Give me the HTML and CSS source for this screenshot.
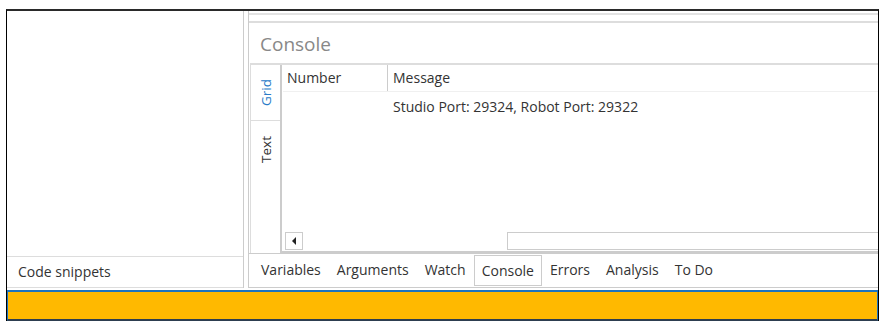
FILE: index.html
```html
<!DOCTYPE html>
<html lang="en">

<head>
    <meta charset="UTF-8">
    <title>Console</title>
    <link rel="stylesheet" href="styles.css">
</head>

<body>
    <div class="frame">
        <div class="main">
            <!-- Left panel -->
            <div class="left-panel">
                <div class="left-fill"></div>
                <div class="left-tab">Code snippets</div>
            </div>

            <!-- Right panel -->
            <div class="right-panel">
                <div class="top-strip"></div>
                <div class="console">
                    <div class="console-title">Console</div>
                    <div class="console-body">
                        <div class="side-tabs">
                            <div class="side-tab active"><span>Grid</span></div>
                            <div class="side-tab"><span>Text</span></div>
                        </div>
                        <div class="grid">
                            <div class="grid-head">
                                <div class="col-num">Number</div>
                                <div class="col-msg">Message</div>
                            </div>
                            <div class="grid-row">
                                <div class="col-num"></div>
                                <div class="col-msg">Studio Port: 29324, Robot Port: 29322</div>
                            </div>
                            <div class="grid-fill"></div>
                            <div class="hscroll">
                                <div class="arrow-btn"><span class="tri"></span></div>
                                <div class="track"></div>
                                <div class="thumb"></div>
                            </div>
                        </div>
                    </div>
                </div>
                <div class="bottom-tabs">
                    <div class="btab">Variables</div>
                    <div class="btab">Arguments</div>
                    <div class="btab">Watch</div>
                    <div class="btab active">Console</div>
                    <div class="btab">Errors</div>
                    <div class="btab">Analysis</div>
                    <div class="btab">To Do</div>
                </div>
            </div>
        </div>

        <!-- Status bar -->
        <div class="status-bar"></div>
    </div>
</body>

</html>
```

FILE: styles.css
```css
body {
    margin: 0;
    background: #fff;
    font-family: 'Open Sans', 'Noto Sans', sans-serif;
    font-size: 13px;
    color: #333;
}

.frame {
    margin: 9px 0 0 6px;
    width: 871px;
    border: 1px solid #000;
    border-top: 2px solid #2a2a2a;
    border-bottom: none;
}

.main {
    display: flex;
    height: 277px;
}

.left-panel {
    width: 236px;
    border-right: 1px solid #ccc;
    display: flex;
    flex-direction: column;
}

.left-fill {
    flex: 1;
}

.left-tab {
    height: 30px;
    border-top: 1px solid #ddd;
    border-bottom: 1px solid #ddd;
    padding-left: 11px;
    line-height: 29px;
    font-size: 14px;
    color: #333;
}

.right-panel {
    flex: 1;
    margin-left: 4px;
    display: flex;
    flex-direction: column;
    border-left: 1px solid #ccc;
}

.top-strip {
    height: 2px;
    border-bottom: 2px solid #e2e2e2;
}

.console {
    margin-top: 6px;
    border-top: 2px solid #ddd;
    flex: 1;
    display: flex;
    flex-direction: column;
    padding-left: 1px;
}

.console-title {
    height: 40px;
    line-height: 43px;
    font-size: 19px;
    color: #888;
    padding-left: 10px;
    border-bottom: 2px solid #ddd;
}

.console-body {
    flex: 1;
    display: flex;
}

.side-tabs {
    width: 29px;
    border-left: 1px solid #ddd;
    display: flex;
    flex-direction: column;
}

.side-tab {
    display: flex;
    align-items: center;
    justify-content: center;
    font-size: 13.5px;
    color: #333;
}

.side-tab span {
    writing-mode: vertical-rl;
    transform: rotate(180deg);
}

.side-tab.active {
    height: 55px;
    color: #2a7bc8;
    border-bottom: 1px solid #ddd;
}

.side-tab:not(.active) {
    height: 56px;
}

.grid {
    flex: 1;
    display: flex;
    flex-direction: column;
    border-left: 2px solid #ccc;
    border-bottom: 2px solid #ccc;
    padding-left: 1px;
}

.grid-head {
    display: flex;
    height: 26px;
    line-height: 26px;
    border-bottom: 1px solid #f0f0f0;
    font-size: 14px;
    color: #333;
}

.grid-row {
    display: flex;
    height: 30px;
    line-height: 30px;
    font-size: 14px;
    color: #333;
}

.col-num {
    width: 104px;
    padding-left: 4px;
    box-sizing: border-box;
}

.grid-head .col-msg {
    border-left: 1px solid #ccc;
}

.col-msg {
    padding-left: 5px;
}

.grid-row .col-msg {
    padding-left: 6px;
}

.grid-fill {
    flex: 1;
}

.hscroll {
    height: 18px;
    display: flex;
    margin-bottom: 1px;
}

.arrow-btn {
    width: 16px;
    margin-left: 2px;
    border: 1px solid #ccc;
    display: flex;
    align-items: center;
    justify-content: center;
}

.tri {
    width: 0;
    height: 0;
    border-top: 4px solid transparent;
    border-bottom: 4px solid transparent;
    border-right: 4px solid #222;
}

.track {
    width: 204px;
}

.thumb {
    flex: 1;
    border: 1px solid #ccc;
    border-right: none;
}

.bottom-tabs {
    height: 33px;
    border-top: 1px solid #ccc;
    border-bottom: 1px solid #ccc;
    display: flex;
    align-items: flex-start;
    padding-left: 4px;
    font-size: 14px;
}

.btab {
    padding: 0 7px;
    height: 30px;
    line-height: 31px;
    border: 1px solid transparent;
    border-top: none;
    color: #333;
}

.btab.active {
    border-color: #ccc;
    margin-top: 1px;
    height: 29px;
    line-height: 29px;
    border-top: 1px solid #ccc;
}

.status-bar {
    margin-top: 2px;
    height: 27px;
    background: #ffb900;
    border-top: 2px solid #1e73be;
    border-left: 1px solid #1e73be;
    border-right: 1px solid #1e73be;
    border-bottom: 2px solid #2d3e50;
}
```
